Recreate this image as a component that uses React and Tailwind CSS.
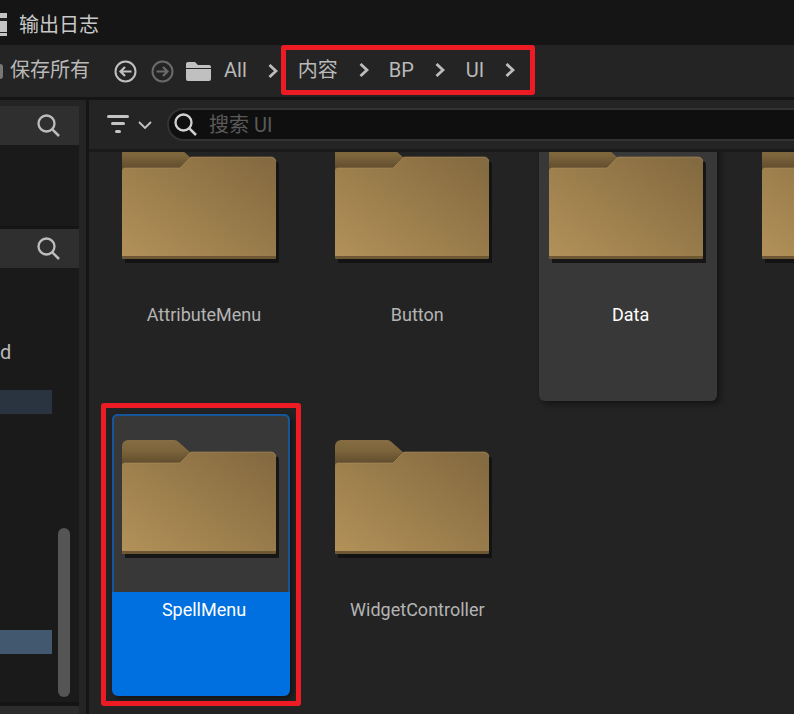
import React from 'react';

const folders = [
  { name: 'AttributeMenu' },
  { name: 'Button' },
  { name: 'Data', hovered: true },
  { name: '' },
  { name: 'SpellMenu', selected: true },
  { name: 'WidgetController' },
];

function SearchIcon({ className }) {
  return (
    <svg className={className} viewBox="0 0 23 23" fill="none" stroke="currentColor" strokeWidth="2.3">
      <circle cx="9.5" cy="9.5" r="8" />
      <path d="M15.3 15.3L22 22" strokeWidth="2.5" />
    </svg>
  );
}

function Chevron({ className = '' }) {
  return (
    <svg className={`w-[10px] h-[14px] text-[#bdbdbd] ${className}`} viewBox="0 0 10 14" fill="none" stroke="currentColor" strokeWidth="2.8">
      <path d="M1.5 1L8 7L1.5 13" />
    </svg>
  );
}

function CircleArrow({ color, direction }) {
  return (
    <svg className={`w-[23px] h-[23px] ${color}`} viewBox="0 0 23 23" fill="none" stroke="currentColor" strokeWidth="2">
      <circle cx="11.5" cy="11.5" r="10" />
      {direction === 'left' ? <path d="M17.5 11.5H6.5M11 7L6.5 11.5L11 16" strokeWidth="2.2" /> : <path d="M5.5 11.5H16.5M12 7L16.5 11.5L12 16" strokeWidth="2.2" />}
    </svg>
  );
}

function FolderArt({ id }) {
  return (
    <svg className="w-[160px] h-[120px] block" viewBox="0 0 160 120">
      <defs>
        <linearGradient id={`front-${id}`} x1="0" y1="1" x2="1" y2="0.1">
          <stop offset="0" stopColor="#b39259" />
          <stop offset="1" stopColor="#846a40" />
        </linearGradient>
        <linearGradient id={`tab-${id}`} x1="0" y1="0" x2="0" y2="1">
          <stop offset="0" stopColor="#866d43" />
          <stop offset="0.45" stopColor="#7c643b" />
          <stop offset="1" stopColor="#5f4c2d" />
        </linearGradient>
      </defs>
      {/* shadow */}
      <path d="M60 15H72L152 15a5 5 0 0 1 5 5V118H3V26H60Z" fill="#111" opacity="0.85" />
      {/* back tab */}
      <path d="M0 6a6 6 0 0 1 6-6H52a6 6 0 0 1 4.5 2L69 13L58 24H0Z" fill={`url(#tab-${id})`} />
      {/* front panel */}
      <path d="M2 23H58L69 12H149a5 5 0 0 1 5 5V112a2 2 0 0 1-2 2H2a2 2 0 0 1-2-2V25a2 2 0 0 1 2-2Z" fill={`url(#front-${id})`} />
      <path d="M2 23H58L69 12H149a5 5 0 0 1 5 5" fill="none" stroke="#b2935f" strokeOpacity="0.55" />
      <path d="M0 111H154V112a2 2 0 0 1-2 2H2a2 2 0 0 1-2-2Z" fill="#6e5733" />
    </svg>
  );
}

function FolderCard({ folder, index }) {
  let cardClass = 'relative w-[178px] h-[282px] rounded-[6px] flex flex-col';
  if (folder.hovered) cardClass += ' bg-[#383838] shadow-[3px_3px_6px_rgba(0,0,0,0.45)]';
  if (folder.selected) cardClass += ' bg-[#0070e0] shadow-[3px_3px_6px_rgba(0,0,0,0.45)]';
  const thumbClass = folder.selected
    ? 'bg-[#383838] rounded-t-[6px] border-x-2 border-t-2 border-[#15569a] pt-[24px] pl-[8px]'
    : 'pt-[26px] pl-[10px]';

  return (
    <div className={cardClass}>
      <div className={`h-[178px] shrink-0 ${thumbClass}`}>
        <FolderArt id={index} />
      </div>
      <div className={`text-center text-[18px] leading-[24px] mt-[6px] pl-[6px] ${folder.selected || folder.hovered ? 'text-white' : 'text-[#b4b4b4]'}`}>
        {folder.name}
      </div>
      {folder.selected && (
        <div className="absolute -left-[11px] -right-[11px] -top-[11px] -bottom-[10px] border-[5px] border-[#ed1c24] rounded-[3px] pointer-events-none" />
      )}
    </div>
  );
}

function SideSearch() {
  return (
    <div className="h-[39px] bg-[#2f2f2f] flex items-center justify-end pr-[19px]">
      <SearchIcon className="w-[23px] h-[23px] text-[#bdbdbd]" />
    </div>
  );
}

export default function App() {
  return (
    <div className="w-[794px] h-[714px] overflow-hidden flex flex-col bg-[#151515] font-['Roboto','Noto_Sans_CJK_SC',sans-serif]">
      {/* tab bar */}
      <div className="h-[45px] shrink-0 flex items-center pt-[4px]">
        <div className="w-[7px] h-[23px] bg-[#c4c4c4] flex flex-col pt-[5px]">
          <div className="h-[3px] bg-[#222]" />
          <div className="h-[11px]" />
          <div className="h-[1px] bg-[#222]" />
        </div>
        <span className="ml-[12px] text-[20px] text-[#c8c8c8]">输出日志</span>
      </div>

      {/* toolbar */}
      <div className="h-[52px] shrink-0 bg-[#242424] flex items-center">
        <div className="w-[3px] h-[15px] mt-[1px] bg-[#777] rounded-r-sm" />
        <span className="ml-[7px] text-[20px] text-[#b9b9b9] -mt-[3px]">保存所有</span>
        <div className="ml-[24px] flex items-center gap-[14px]">
          <CircleArrow color="text-[#c0c0c0]" direction="left" />
          <CircleArrow color="text-[#6a6a6a]" direction="right" />
        </div>
        <svg className="ml-[12px] w-[25px] h-[19px] text-[#c0c0c0]" viewBox="0 0 25 19" fill="currentColor">
          <path d="M0 2a2 2 0 0 1 2-2H9l3 3H23a2 2 0 0 1 2 2V6H0ZM0 7H25V17a2 2 0 0 1-2 2H2a2 2 0 0 1-2-2Z" />
        </svg>
        <span className="ml-[13px] text-[20px] text-[#b9b9b9] -mt-[3px]">All</span>
        <Chevron className="ml-[21px]" />
        <div className="ml-[3px] w-[254px] h-[50px] -mt-[2px] border-[5px] border-[#ed1c24] rounded-[3px] flex items-center pl-[12px] text-[20px] text-[#b9b9b9]">
          <span>内容</span>
          <Chevron className="ml-[21px]" />
          <span className="ml-[20px]">BP</span>
          <Chevron className="ml-[21px]" />
          <span className="ml-[21px]">UI</span>
          <Chevron className="ml-[21px]" />
        </div>
      </div>

      {/* body */}
      <div className="flex-1 min-h-0 flex pt-[3px] gap-[3px]">
        {/* left panel */}
        <div className="w-[86px] shrink-0 bg-[#242424] pt-[6px] pr-[7px] flex flex-col">
          <SideSearch />
          <div className="h-[84px] shrink-0 bg-[#1a1a1a] border-b-[3px] border-[#151515]" />
          <SideSearch />
          <div className="flex-1 relative bg-[#1a1a1a] border-b-[4px] border-[#141414] overflow-hidden">
            <div className="mt-[72px] h-[24px] leading-[24px] text-[20px] text-[#b9b9b9]">d</div>
            <div className="mt-[26px] w-[52px] h-[24px] bg-[#2a3440]" />
            <div className="mt-[216px] w-[52px] h-[24px] bg-[#42586f]" />
            <div className="absolute left-[58px] top-[260px] w-[12px] h-[169px] rounded-full bg-[#555]" />
          </div>
          <div className="h-[8px] shrink-0 bg-[#2c2c2c]" />
        </div>

        {/* content panel */}
        <div className="flex-1 min-w-0 bg-[#232323] flex flex-col">
          <div className="h-[49px] shrink-0 bg-[#242424] flex items-center pl-[18px] border-b-[3px] border-[#1a1a1a] box-content">
            <svg className="w-[22px] h-[19px] text-[#c4c4c4]" viewBox="0 0 22 19" fill="currentColor">
              <rect x="0" y="0" width="22" height="3" rx="1.5" />
              <rect x="4" y="7" width="14" height="3" rx="1.5" />
              <rect x="8" y="15" width="6" height="3" rx="1.5" />
            </svg>
            <svg className="ml-[9px] w-[14px] h-[8px] text-[#c4c4c4]" viewBox="0 0 14 8" fill="none" stroke="currentColor" strokeWidth="1.8">
              <path d="M1 1L7 7L13 1" />
            </svg>
            <div className="ml-[15px] flex-1 h-[33px] bg-[#0f0f0f] border-y-2 border-l-2 border-[#333] rounded-l-full flex items-center pl-[5px]">
              <SearchIcon className="w-[23px] h-[23px] text-[#d0d0d0]" />
              <span className="ml-[12px] text-[20px] text-[#5a5a5a]">搜索 UI</span>
            </div>
          </div>
          <div className="flex-1 min-h-0 overflow-hidden">
            <div className="-mt-[33px] ml-[23px] grid grid-cols-[repeat(4,178px)] gap-x-[35.33px] gap-y-[13px]">
              {folders.map((folder, i) => (
                <FolderCard key={i} folder={folder} index={i} />
              ))}
            </div>
          </div>
        </div>
      </div>
    </div>
  );
}
